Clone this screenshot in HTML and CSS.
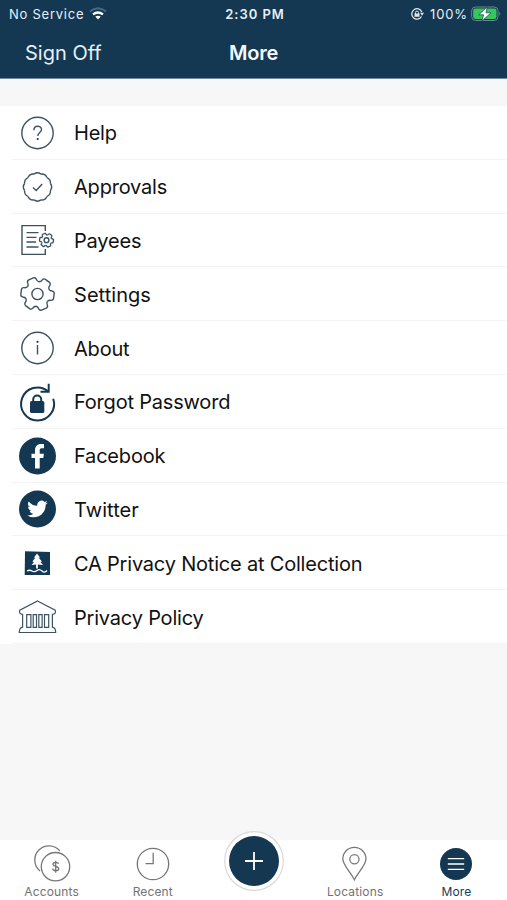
FILE: index.html
```html
<!DOCTYPE html>
<html lang="en">
<head>
<meta charset="utf-8">
<title>More</title>
<link rel="stylesheet" href="styles.css">
</head>
<body>
<svg class="defs" width="0" height="0" aria-hidden="true">
  <defs>
    <path id="tooth" d="M10.700-6.180Q12-4.500 14.200-4.700Q16.300-4.600 16.500-2.500V2.500Q16.300 4.600 14.200 4.700Q12 4.500 10.700 6.180"/>
    <g id="gear"><use href="#tooth"/><use href="#tooth" transform="rotate(60)"/><use href="#tooth" transform="rotate(120)"/><use href="#tooth" transform="rotate(180)"/><use href="#tooth" transform="rotate(240)"/><use href="#tooth" transform="rotate(300)"/></g>
    <path id="lobe" d="M12.900-3.460Q15.500 0 12.900 3.460"/>
    <g id="lobes"><use href="#lobe"/><use href="#lobe" transform="rotate(30)"/><use href="#lobe" transform="rotate(60)"/></g>
    <g id="seal"><use href="#lobes"/><use href="#lobes" transform="rotate(90)"/><use href="#lobes" transform="rotate(180)"/><use href="#lobes" transform="rotate(270)"/></g>
  </defs>
</svg>
<div class="app">
  <header class="header">
    <div class="status">
      <div class="carrier"><span>No Service</span>
        <svg width="18" height="14" viewBox="0 0 18 14" fill="none"><path d="M1 4.500Q9-2 17 4.500" stroke="#476a83" stroke-width="2"/><path d="M4 7.400Q9 3.600 14 7.400" stroke="#fff" stroke-width="2.200"/><path d="M6.300 9.600Q9 7.800 11.700 9.600L9 12.500Z" fill="#fff"/></svg>
      </div>
      <time class="clock">2:30 PM</time>
      <div class="power">
        <svg width="14" height="14" viewBox="0 0 14 14" fill="none" stroke="#dce7ef" stroke-width="1.300"><path d="M11.500 9.500A5.200 5.200 0 1 1 11.800 5"/><path d="M10 5.800h4l-2 3z" fill="#dce7ef" stroke="none"/><path d="M4.500 6.500h5v3.300h-5z" fill="#dce7ef" stroke="none"/><path d="M5.500 7V5.600a1.500 1.500 0 0 1 3 0V7" stroke-width="1"/></svg>
        <span class="percent">100%</span>
        <svg width="30" height="16" viewBox="0 0 30 16"><rect x=".7" y="1" width="26.300" height="13.500" rx="3.800" fill="none" stroke="#6c8797"/><rect x="2.200" y="2.500" width="23.300" height="10.500" rx="2.300" fill="#34c759"/><path d="M28.300 5.700q2 2 0 4z" fill="#6c8797"/><path d="M16.300.8 7.800 8.800h4.800L10.800 15.200 20 6.800h-5z" fill="#fff" stroke="#143851" stroke-width=".7"/></svg>
      </div>
    </div>
    <div class="navbar"><a class="signoff">Sign Off</a><h1>More</h1></div>
  </header>
  <main class="content">
    <ul class="menu">
      <li><svg viewBox="0 0 40 40"><circle cx="20.500" cy="20" r="15.700"/><path d="M16.900 17.200c0-5.400 7.600-5.100 7.600-.6 0 3-3.700 2.900-3.700 6.400"/><circle class="solid" cx="20.700" cy="26" r="1.100"/></svg><span>Help</span></li>
      <li><svg viewBox="0 0 40 40"><use href="#seal" transform="translate(20.500 20)"/><path d="m16 20.500 3.200 2.900 6-6.300"/></svg><span>Approvals</span></li>
      <li><svg viewBox="0 0 40 40"><path d="M28.300 11V5.600H5v28.800h23.300V29M9.500 12.600h12M9.500 17.400h10M9.500 22h9.500M9.500 27h12"/><use href="#gear" class="hairline" transform="translate(29.500 20.200) rotate(7) scale(.42)"/><circle cx="29.500" cy="20.200" r="2.400"/></svg><span>Payees</span></li>
      <li><svg viewBox="0 0 40 40"><use href="#gear" transform="translate(20.500 20) rotate(7)"/><circle cx="20.500" cy="20" r="5.600"/></svg><span class="wide">Settings</span></li>
      <li><svg viewBox="0 0 40 40"><circle cx="20.500" cy="20" r="15.700"/><path d="M20.500 17v9.500"/><circle class="solid" cx="20.500" cy="13.800" r="1.100"/></svg><span>About</span></li>
      <li><svg class="bold" viewBox="0 0 40 40"><path d="M36.200 16.700A16.500 16.500 0 1 1 31 9.200M31.700 1.700V9.700H23.500"/><rect class="solid" x="13" y="19" width="14.300" height="12" rx="1.600"/><path d="M16.200 20v-2.500a4 4 0 0 1 8 0V20"/></svg><span>Forgot Password</span></li>
      <li><svg viewBox="0 0 40 40"><circle class="solid" cx="20.500" cy="20" r="18.500"/><path class="cutout" d="M18 32.500V22h-3.500v-4.300H18v-3.200C18 10.500 20.300 8 24 8h3v4.200h-2.200c-1.600 0-2.100.9-2.100 2.300v3.200h4.200l-.6 4.300h-3.600v10.500Z"/></svg><span>Facebook</span></li>
      <li><svg viewBox="0 0 40 40"><circle class="solid" cx="20.500" cy="20" r="18.500"/><path class="cutout" transform="translate(10.300 9.800) scale(.85)" d="M23.950 4.570a10 10 0 0 1-2.820.770 4.960 4.960 0 0 0 2.160-2.720 9.900 9.900 0 0 1-3.120 1.180 4.920 4.920 0 0 0-8.380 4.480A13.930 13.930 0 0 1 1.640 3.160a4.920 4.920 0 0 0 1.520 6.570 4.900 4.900 0 0 1-2.230-.610v.060a4.920 4.920 0 0 0 3.950 4.830 5 5 0 0 1-2.210.080 4.940 4.940 0 0 0 4.600 3.420A9.870 9.870 0 0 1 0 19.540a13.990 13.990 0 0 0 7.550 2.210c9.050 0 14-7.500 14-13.980v-.640a9.940 9.940 0 0 0 2.400-2.560Z"/></svg><span class="wide">Twitter</span></li>
      <li><svg viewBox="0 0 40 40"><path class="solid" d="M8 8.200 33 9V32H7.700Z"/><path class="cutout" d="m20 10.500 3 4-1.300.3 3.300 3.700-1.500.4 2.500 3.100-5.100-.5v4h-1.800v-4l-4.500.5 2.300-3.100-1.500-.4 2.800-3.700-1.200-.3Z"/><path class="wave" d="M10 28q2.500-1.500 5 0t5-.5 5 .5 5-.5"/></svg><span>CA Privacy Notice at Collection</span></li>
      <li><svg class="fine" viewBox="0 0 40 40"><path d="M20.500 4 38.200 13.200q1.200 4-2.800 4.200V30.200q3.200.3 3.300 5.300H2.300q.1-5 3.300-5.300V17.400q-4-.2-2.800-4.200ZM9.700 17.600h4.200v12.700H9.700ZM16.200 17.600h3.300v12.700h-3.300ZM21.800 17.600h3.300v12.700h-3.300ZM27.500 17.600h4.200v12.700h-4.200Z"/></svg><span>Privacy Policy</span></li>
    </ul>
  </main>
  <nav class="tabs">
    <a><svg viewBox="0 0 40 40"><path d="M8 27A14.200 14.200 0 1 1 27.800 6.800"/><circle cx="23.500" cy="22.700" r="14.200"/><path d="M26.500 19.900c-.5-2.300-5.600-2-5.500.5.100 2.500 5.700 1.500 5.700 4.300 0 2.600-5.600 2.800-6.100 0M23.700 16.700v12"/></svg><span>Accounts</span></a>
    <a><svg viewBox="0 0 40 40"><circle cx="20" cy="20" r="15.700"/><path d="M20.200 8.800v10.800h-7.700"/></svg><span>Recent</span></a>
    <a class="add"><svg viewBox="0 0 60 60"><circle class="ring" cx="30" cy="30" r="29.300"/><circle class="solid" cx="30" cy="30" r="25"/><path d="M30 21v18M21 30h18"/></svg></a>
    <a><svg viewBox="0 0 40 40"><path d="M19.400 35.800C16.100 29 7.800 20.800 7.800 15a11.600 11.600 0 0 1 23.200 0c0 5.800-8.300 14-11.600 20.800Z"/><circle cx="19.400" cy="15.300" r="4.600"/></svg><span>Locations</span></a>
    <a class="active"><svg viewBox="0 0 40 40"><circle class="solid" cx="20" cy="20" r="16"/><path d="M11.800 14.700h16.400M11.800 20h16.400M11.800 25.300h16.400"/></svg><span>More</span></a>
  </nav>
</div>
</body>
</html>
```
FILE: styles.css
```css
*{box-sizing:border-box}
body{margin:0;font-family:Inter,"Liberation Sans",sans-serif;color:#111}
.defs{display:block}
.app{height:900px;display:flex;flex-direction:column;background:#f7f7f7}
.header{height:79px;background:#143851;color:#e6f0f9;border-bottom:1px solid #6f8aa0}
.status{height:27px;display:grid;grid-template-columns:1fr auto 1fr;align-items:center;padding:0 6px 0 9px;font-size:13px}
.carrier,.power{display:flex;align-items:center;gap:5px}
.carrier{letter-spacing:.75px}
.power{justify-content:flex-end;gap:4px}
.percent{letter-spacing:.9px;margin:0 -1px 0 2px}
.clock{font-weight:600;letter-spacing:.95px}
.navbar{height:51px;display:grid;grid-template-columns:1fr auto 1fr;align-items:center;padding:0 25px;font-size:20px}
h1{margin:0;font-size:20px;font-weight:600;letter-spacing:-.2px;color:#f4f9fd}
.content{flex:1;padding-top:27px}
.menu{list-style:none;margin:0;padding:0;background:#fff}
.menu li{height:53.8px;display:flex;align-items:center;padding-left:17px;font-size:20px;letter-spacing:-.2px;background:linear-gradient(#f3f3f3,#f3f3f3) 12px 100%/100% 1px no-repeat}
.menu span{padding-top:1px}
.menu .wide{letter-spacing:.05px}
.menu svg{width:40px;height:40px;margin-right:17px;flex:none;fill:none;stroke:#3c5263;stroke-width:1.400;overflow:visible}
.menu .solid,.tabs .solid{fill:#143851;stroke:none}
.menu .cutout{fill:#fff;stroke:none}
.menu .wave{stroke:#fff;stroke-width:1.300}
.menu .bold{stroke:#143851;stroke-width:2}
.menu .fine{stroke-width:1.200}
.menu .hairline{stroke-width:3.200}
.tabs{height:60px;padding-left:1px;background:#fff;display:grid;grid-template-columns:repeat(5,1fr);font-size:12px;letter-spacing:.15px;color:#737373}
.tabs a{display:flex;flex-direction:column;align-items:center;padding-top:4px}
.tabs svg{width:40px;height:40px;fill:none;stroke:#777;stroke-width:1.300}
.tabs .active{color:#183c54}
.tabs .active svg{stroke:#fff}
.tabs .add{padding:0}
.tabs .add svg{width:60px;height:60px;margin-top:-9px;stroke:#fff;stroke-width:1.800}
.tabs .add .ring{fill:#fff;stroke:#d9d9d9;stroke-width:1.200}
```
